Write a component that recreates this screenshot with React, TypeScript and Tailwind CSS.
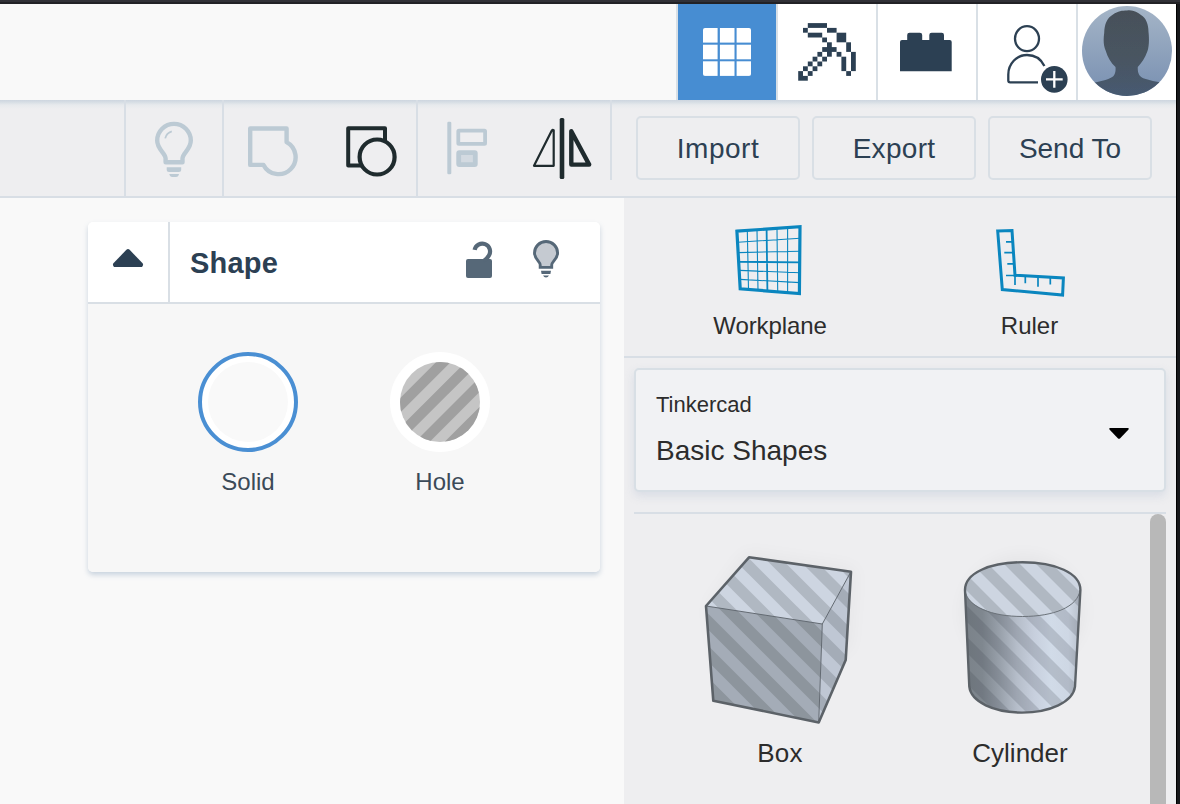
import type { ReactNode } from "react";

type DrawingProps = { box: string; className: string; children: ReactNode };

function Drawing({ box, className, children }: DrawingProps) {
  return (
    <svg viewBox={box} className={`block shrink-0 ${className}`} fill="none" aria-hidden="true">
      {children}
    </svg>
  );
}

const NAVY = "#2c4053";
const INK = "#1f2b2e";
const MUTED = "#bccad4";
const BLUE = "#0a86bf";

/* Each entry: [column, row, width, height] on a 12 x 12 pixel grid */
const PICKAXE = [
  [2, 0, 4, 1], [1, 1, 1, 1], [6, 1, 2, 1], [2, 2, 3, 1], [8, 2, 2, 2], [5, 3, 1, 1],
  [6, 4, 1, 3], [10, 4, 1, 2], [5, 5, 3, 1], [4, 6, 1, 1], [8, 6, 1, 1], [11, 6, 1, 4],
  [3, 7, 1, 1], [5, 7, 1, 1], [9, 7, 1, 3], [2, 8, 1, 1], [4, 8, 1, 1], [1, 9, 1, 1],
  [3, 9, 1, 1], [0, 10, 1, 2], [2, 10, 1, 1], [10, 10, 1, 1], [1, 11, 1, 1],
];

function Header() {
  return (
    <header className="flex h-24 justify-end bg-[#f9f9f9]">
      <button className="h-24 w-[100px] border-l-2 border-[#d9e0e6] bg-[#478dd2]">
        <Drawing box="678 4 98 96" className="h-24 w-[98px]">
          <clipPath id="grid-clip"><rect x="703" y="28" width="48" height="48" rx="2" /></clipPath>
          <g clipPath="url(#grid-clip)" fill="#fff">
            {[28, 44.7, 61.3].map((y) =>
              [703, 719.9, 736.6].map((x) => <rect key={`${x}-${y}`} x={x} y={y} width="14.6" height="14.6" />)
            )}
          </g>
        </Drawing>
      </button>
      <button className="h-24 w-[100px] border-l-2 border-[#d9e0e6] bg-white">
        <Drawing box="778 4 98 96" className="h-24 w-[98px]">
          <g transform="translate(798.2 23.1) scale(4.8)" fill={NAVY}>
            {PICKAXE.map(([x, y, w, h]) => <rect key={`${x}-${y}`} x={x} y={y} width={w} height={h} />)}
          </g>
        </Drawing>
      </button>
      <button className="h-24 w-[100px] border-l-2 border-[#d9e0e6] bg-white">
        <Drawing box="878 4 98 96" className="h-24 w-[98px]">
          <path fill={NAVY} d="M902 40H907.2V35Q907.2 32.7 909.5 32.7H919.8Q922.2 32.7 922.2 35V40H929.3V35Q929.3 32.7 931.6 32.7H941.7Q944 32.7 944 35V40H949.7Q951.7 40 951.7 42V71.2H900V42Q900 40 902 40Z" />
        </Drawing>
      </button>
      <button className="h-24 w-[100px] border-l-2 border-[#d9e0e6] bg-white">
        <Drawing box="978 4 98 96" className="h-24 w-[98px]">
          <g stroke={NAVY} strokeWidth="2.3">
            <ellipse cx="1027" cy="38.7" rx="12" ry="12.5" />
            <path d="M1044.4 66C1041 59 1034.5 55 1027 55C1016.5 55 1008.3 64 1008.3 74.5V80.5Q1008.3 82.4 1010.2 82.4H1038" />
          </g>
          <circle cx="1054.3" cy="79.4" r="13.3" fill={NAVY} />
          <path d="M1046 79.4H1062.7M1054.3 71V87.7" stroke="#fff" strokeWidth="2.3" />
        </Drawing>
      </button>
      <div className="h-24 w-[100px] border-l-2 border-[#d9e0e6] bg-white">
        <Drawing box="1078 4 98 96" className="h-24 w-[98px]">
          <defs>
            <linearGradient id="sky" x1="0" y1="0" x2="0" y2="1">
              <stop offset="0" stopColor="#a5b5c7" />
              <stop offset="1" stopColor="#788fb1" />
            </linearGradient>
            <linearGradient id="person" x1="0" y1="0" x2="0" y2="1">
              <stop offset="0" stopColor="#475059" />
              <stop offset="0.55" stopColor="#485562" />
              <stop offset="1" stopColor="#475b73" />
            </linearGradient>
            <filter id="soft"><feGaussianBlur stdDeviation="0.7" /></filter>
            <clipPath id="avatar"><circle cx="1127" cy="51" r="45" /></clipPath>
          </defs>
          <g clipPath="url(#avatar)">
            <rect x="1082" y="6" width="90" height="90" fill="url(#sky)" />
            <path filter="url(#soft)" fill="url(#person)" d="M1127 10.5C1133 9.5 1137.5 12.5 1141 15C1146 18 1148.5 24 1148.5 32C1149 36 1149.5 45 1147.5 51C1145 58 1141.5 63 1137.8 67C1137.5 72 1138.5 76.5 1144 78.5C1150 80.5 1156 81.5 1161 82.5L1172 100H1080L1091 83.5C1097 81.5 1108 80.5 1113 76.5C1115.5 74 1115.8 70 1115.5 67C1111 63 1107.5 57 1105.8 51C1103 45 1103.5 38 1104.2 33C1104.5 24 1107 18 1113 14.5C1118 11 1122 10.5 1127 10.5Z" />
          </g>
        </Drawing>
      </div>
    </header>
  );
}

function ToolButton({ label, spacing = "" }: { label: string; spacing?: string }) {
  return (
    <button className={`h-16 w-[164px] rounded-[5px] border-2 border-[#d9dfe5] bg-[#eeeef0] pt-0.5 text-[28px] leading-[58px] text-[#2c4053] ${spacing}`}>
      {label}
    </button>
  );
}

function Toolbar() {
  return (
    <div className="flex h-[98px] border-b-2 border-[#d8dee5] bg-[#eeeef0] bg-[linear-gradient(#cdd6df_0px,#d6dde4_2px,#e7eaed_5px,#eeeef0_9px)]">
      <div className="w-[124px]" />
      <div className="w-[98px] border-l-2 border-[#d8dee5]">
        <Drawing box="126 100 96 96" className="size-24">
          <path stroke={MUTED} strokeWidth="4.4" strokeLinejoin="round" d="M165.6 162.2H182.5V158.5C182.5 153 190.8 149.5 190.8 140.5A16.8 16.6 0 0 0 157.2 140.5C157.2 149.5 165.6 153 165.6 158.5Z" />
          <path stroke={MUTED} strokeWidth="1.8" d="M165.2 138.4Q166.5 133 171.8 131.4" />
          <path fill={MUTED} d="M166.7 167.3H181.2V170Q181.2 172 179 172H169Q166.7 172 166.7 170ZM169.3 174H179Q178.5 177 176 177H172.3Q169.8 177 169.3 174Z" />
        </Drawing>
      </div>
      <div className="flex w-[194px] border-l-2 border-[#d8dee5]">
        <Drawing box="224 100 98 96" className="h-24 w-[98px]">
          <path stroke={MUTED} strokeWidth="4.4" strokeLinejoin="round" d="M250.2 128.5H286.6V142.1A17 17 0 1 1 263.5 164.9H250.2Z" />
        </Drawing>
        <Drawing box="322 100 94 96" className="h-24 w-[94px]">
          <g stroke={INK} strokeWidth="4" strokeLinejoin="round">
            <path d="M385 141V128.3H348.2V165.4H361" />
            <circle cx="377.1" cy="157" r="17.5" strokeWidth="4.2" />
          </g>
        </Drawing>
      </div>
      <div className="flex w-[194px] border-l-2 border-[#d8dee5]">
        <Drawing box="418 100 96 96" className="size-24">
          <rect x="447.3" y="121.7" width="4" height="52.6" rx="1.3" fill={MUTED} />
          <rect x="458.3" y="130.6" width="26.8" height="13.2" rx="0.6" stroke={MUTED} strokeWidth="3.8" />
          <rect x="458.7" y="152.7" width="16.6" height="12" rx="0.6" fill="#d3dae1" stroke={MUTED} strokeWidth="4.8" />
        </Drawing>
        <Drawing box="514 100 96 96" className="size-24">
          <g stroke={INK} strokeLinejoin="round">
            <rect x="559.7" y="118" width="4.6" height="61" rx="1.5" fill={INK} stroke="none" />
            <path strokeWidth="2.2" d="M551.8 130.6Q552.6 129.6 553.7 130.2V165.8H534Z" />
            <path strokeWidth="4.4" d="M571.3 131.2V164.6H589.2Z" />
          </g>
        </Drawing>
      </div>
      <div className="h-20 w-[26px] border-l-2 border-[#d8dee5]" />
      <div className="flex gap-3 pt-4">
        <ToolButton label="Import" spacing="tracking-[0.5px]" />
        <ToolButton label="Export" spacing="tracking-[0.3px]" />
        <ToolButton label="Send To" />
      </div>
    </div>
  );
}

function ShapePanel() {
  return (
    <section className="h-[350px] w-[512px] overflow-hidden rounded-[5px] bg-[#f7f7f7]">
      <div className="flex h-[82px] border-b-2 border-[#d9dfe5] bg-white">
        <Drawing box="88 222 80 80" className="size-20">
          <path fill={NAVY} d="M126.4 249.8Q128 248.4 129.6 249.8L142.6 263.3Q143.8 265 142 267H114Q112.2 265 113.4 263.3Z" />
        </Drawing>
        <div className="flex w-[280px] items-center border-l-2 border-[#d9dfe5] pt-[3px] pl-5 text-[29px] font-bold tracking-[0.2px] text-[#2c4053]">
          Shape
        </div>
        <Drawing box="448 222 64 80" className="h-20 w-16">
          <rect x="466" y="259" width="26" height="19" rx="2" fill="#566878" />
          <path stroke="#566878" strokeWidth="4.2" d="M474.6 249.9A7.8 7.8 0 1 1 488.9 255.5Q487.4 258.5 483.8 261" />
        </Drawing>
        <Drawing box="512 222 88 80" className="h-20 w-[88px]">
          <path fill="#c5cad1" stroke="#566878" strokeWidth="2.9" d="M540.2 267.4H551.7V265C551.7 261.5 557.6 259 557.6 253A11.5 11.4 0 0 0 534.5 253C534.5 259 540.2 261.5 540.2 265Z" />
          <path fill="#566878" d="M541 270.8H551L550.4 274H541.6ZM543 275.6H549Q548 277.6 546 277.6Q544 277.6 543 275.6Z" />
        </Drawing>
      </div>
      <div className="flex pt-12 pl-[64px]">
        <div className="flex w-48 flex-col items-center">
          <div className="size-[100px] rounded-full border-4 border-[#4a8fd3] bg-white p-1.5">
            <div className="size-20 rounded-full bg-[#f9f9f9]" />
          </div>
          <div className="mt-3 text-2xl leading-9 text-[#3b4a58]">Solid</div>
        </div>
        <div className="flex w-48 flex-col items-center">
          <Drawing box="390 352 100 100" className="size-[100px]">
            <clipPath id="hole"><circle cx="440" cy="402" r="40" /></clipPath>
            <circle cx="440" cy="402" r="50" fill="#fff" />
            <circle cx="440" cy="402" r="40" fill="#c5c5c5" />
            <g clipPath="url(#hole)" stroke="#a0a0a0" strokeWidth="10.3">
              {[805.5, 834.9, 864.3, 893.7].map((s) => (
                <path key={s} d={`M${s - 340} 340L${s - 470} 470`} />
              ))}
            </g>
          </Drawing>
          <div className="mt-3 text-2xl leading-9 text-[#3b4a58]">Hole</div>
        </div>
      </div>
    </section>
  );
}

function WorkplaneIcon() {
  return (
    <Drawing box="730 220 80 80" className="size-20">
      <g stroke={BLUE}>
        <path strokeWidth="3.2" d="M736.9 231.2L800 226.7L799.4 293.6L740.2 288.8Z" />
        <path strokeWidth="1.1" d="M747.3 230L748.5 289.7M757 230L758 290.3M777 229L777.7 291.5M787.6 228V292.5M738 242.2L800 238.3M738.5 252.6L800 251.2M739.5 270.4L800 272.8M740 279.4L800 282.6" />
        <path strokeWidth="1.8" d="M766.6 229L767.4 291M738.5 261.8L800 262.3" />
      </g>
    </Drawing>
  );
}

function RulerIcon() {
  return (
    <Drawing box="990 220 80 80" className="size-20">
      <g stroke={BLUE}>
        <path strokeWidth="3" d="M997.7 231L1012 230.6L1015 275.3L1063.4 278L1062.6 295L1002.3 289.6Z" />
        <path strokeWidth="1.7" d="M1006 241.8H1012.5M1004.3 252.7H1013.3M1007.3 263.8H1014M1006 275.5H1015M1015 275V285M1025.3 276V283.3M1038 277V286.8M1050.3 278V284.5" />
      </g>
    </Drawing>
  );
}

function BoxShape() {
  const bands = [-89, -57, -24.5, 7.5, 39.5, 71.5, 103.5, 135.5, 167.5];
  return (
    <Drawing box="690 540 180 200" className="h-[200px] w-[180px]">
      <defs>
        <clipPath id="box-top"><path d="M749 557L851 571.5L822.3 624L706 606Z" /></clipPath>
        <clipPath id="box-front"><path d="M706 606L822.3 624L818.7 722.7L713 701Z" /></clipPath>
        <clipPath id="box-side"><path d="M851 571.5L845.7 660L818.7 722.7L822.3 624Z" /></clipPath>
        <filter id="halo" x="-30%" y="-30%" width="160%" height="160%"><feGaussianBlur stdDeviation="9" /></filter>
      </defs>
      <path d="M746 552L856 568L850 650L722 690L708 606Z" fill="#000" opacity="0.03" filter="url(#halo)" />
      {[
        ["box-top", "#cdd5e1", "#b0b8c2"],
        ["box-front", "#a4acb7", "#8d959d"],
        ["box-side", "#bfc7d4", "#a4acb7"],
      ].map(([clip, light, dark]) => (
        <g key={clip} clipPath={`url(#${clip})`}>
          <rect x="700" y="550" width="160" height="180" fill={light} />
          <g stroke={dark} strokeWidth="11.4">
            {bands.map((b) => <path key={b} d={`M690 ${500 + b}L890 ${700 + b}`} />)}
          </g>
        </g>
      ))}
      <path d="M706 606L822.3 624L851 571.5M822.3 624L818.7 722.7" stroke="#636a72" strokeWidth="1" />
      <path d="M749 557.3L851 571.7L845.7 660L818.7 722.4L713.3 700.8L706 606Z" stroke="#5c6268" strokeWidth="2.6" strokeLinejoin="round" />
    </Drawing>
  );
}

function CylinderShape() {
  const body = "M965 590L969.3 686.7C971 702 994 712.6 1022 712.6S1073 702 1075 686.7L1080.4 590Z";
  const bands = [-194, -162, -130, -98, -66, -34, -3, 28, 59, 90];
  return (
    <Drawing box="935 540 170 200" className="h-[200px] w-[170px]">
      <defs>
        <linearGradient id="side" x1="965" x2="1080" y1="0" y2="0" gradientUnits="userSpaceOnUse">
          <stop offset="0" stopColor="#7b8289" />
          <stop offset="0.15" stopColor="#7f878f" />
          <stop offset="0.3" stopColor="#98a0aa" />
          <stop offset="0.45" stopColor="#b5bdc9" />
          <stop offset="0.6" stopColor="#c7cfdd" />
          <stop offset="0.75" stopColor="#d1dbe8" />
          <stop offset="0.9" stopColor="#ced7e4" />
          <stop offset="1" stopColor="#b9c1cd" />
        </linearGradient>
        <clipPath id="cyl-body"><path d={body} /></clipPath>
        <clipPath id="cyl-top"><ellipse cx="1022.6" cy="589.3" rx="57.6" ry="27.2" /></clipPath>
      </defs>
      <ellipse cx="1023" cy="612" rx="60" ry="56" fill="#000" opacity="0.04" filter="url(#halo)" />
      <g clipPath="url(#cyl-body)">
        <rect x="960" y="585" width="125" height="130" fill="url(#side)" />
        <g stroke="#3a4248" strokeOpacity="0.19" strokeWidth="11.2">
          {bands.map((b) => <path key={b} d={`M940 ${590 + b}L1110 ${760 + b}`} />)}
        </g>
      </g>
      <ellipse cx="1022.6" cy="589.3" rx="57.6" ry="27.2" fill="#cdd5e1" />
      <g clipPath="url(#cyl-top)" stroke="#b0b8c2" strokeWidth="11.2">
        {bands.map((b) => <path key={b} d={`M940 ${590 + b}L1110 ${760 + b}`} />)}
      </g>
      <path d="M965 590C967 607 992 616.5 1022.6 616.5S1078 607 1080 590" stroke="#6b7279" strokeWidth="1" />
      <path d="M965 590C965 573 990 562.2 1022.6 562.2S1080.4 573 1080.4 590L1075 686.7C1073 702 1050 712.6 1022 712.6S971 702 969.3 686.7Z" stroke="#5c6268" strokeWidth="2.4" />
    </Drawing>
  );
}

function Sidebar() {
  return (
    <aside className="h-[606px] w-[552px] bg-[#eeeef0]">
      <div className="flex h-40 border-b-2 border-[#d8dee5] pt-[22px] text-2xl leading-7 text-[#2c2c2c]">
        <div className="flex w-[292px] flex-col items-center">
          <WorkplaneIcon />
          <div className="mt-3 tracking-[-0.1px]">Workplane</div>
        </div>
        <div className="flex w-[226px] flex-col items-center pl-px">
          <RulerIcon />
          <div className="mt-3">Ruler</div>
        </div>
      </div>
      <div className="px-2.5 pt-2.5">
        <div className="flex h-[124px] items-center justify-between rounded-[5px] border-2 border-[#d8dfe5] bg-[#f1f2f4] pr-[35px] pl-5 text-[#2c2c2c] shadow-[0_4px_10px_rgba(190,200,215,0.45)]">
          <div>
            <div className="text-[22px] leading-7">Tinkercad</div>
            <div className="mt-3.5 text-[28px] leading-9">Basic Shapes</div>
          </div>
          <Drawing box="1109 427 20 14" className="mt-2 h-3.5 w-5">
            <path fill="#000" d="M1110 428H1128Q1129.3 428.5 1128.3 429.8L1120.2 438.2Q1119 439.2 1117.8 438.2L1109.7 429.8Q1108.7 428.5 1110 428Z" />
          </Drawing>
        </div>
        <div className="mt-5 flex h-[292px] border-t-2 border-[#d8dee5] text-[26px] leading-8 text-[#2c2c2c]">
          <div className="flex w-[292px] flex-col items-center pt-[26px]">
            <BoxShape />
            <div className="-mt-[3px] tracking-[0.3px]">Box</div>
          </div>
          <div className="flex w-[188px] flex-col items-center pt-[26px]">
            <CylinderShape />
            <div className="-mt-[3px]">Cylinder</div>
          </div>
          <div className="ml-auto w-4 rounded-t-full bg-[#b8b8b8]" />
        </div>
      </div>
    </aside>
  );
}

export default function App() {
  return (
    <div className="flex h-[804px] w-[1180px] flex-col overflow-hidden bg-[#2a2a30] font-['Liberation_Sans',Arial,sans-serif]">
      <div className="h-1 shrink-0 bg-[linear-gradient(#313137_50%,#222226_50%)]" />
      <div className="flex">
        <div className="w-[1176px]">
          <Header />
          <Toolbar />
          <main className="flex bg-[#f9f9f9]">
            <div className="w-[624px] pt-6 pl-[88px]">
              <div className="w-[512px] rounded-[5px] shadow-[0_3px_5px_rgba(190,203,216,0.8)]">
                <ShapePanel />
              </div>
            </div>
            <Sidebar />
          </main>
        </div>
        <div className="w-1 border-l border-black bg-[#17181b]" />
      </div>
    </div>
  );
}
